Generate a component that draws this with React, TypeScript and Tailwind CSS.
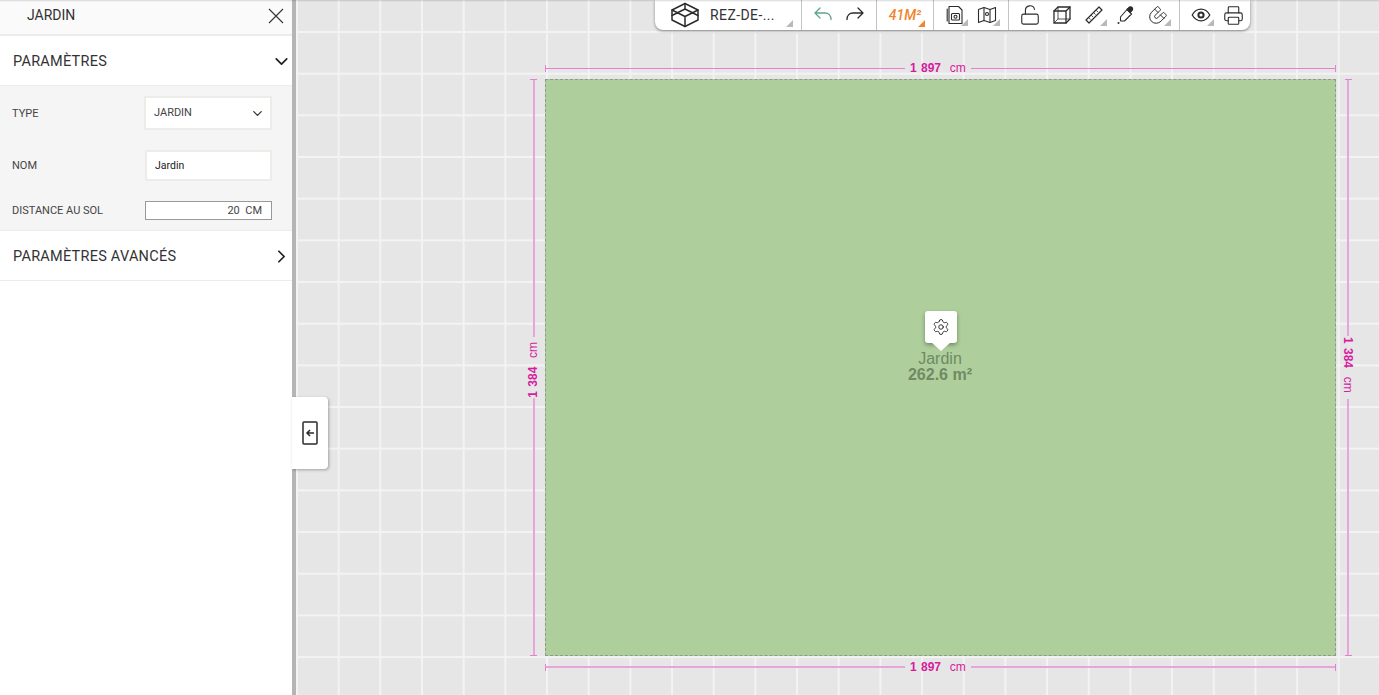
import { ChevronDown, ChevronRight, LockOpen, Magnet, Printer, Settings } from 'lucide-react'
import type { ReactNode } from 'react'

const Corner = () => (
  <span className="absolute right-[3px] bottom-[4px] h-[7px] w-[7px] bg-[#b9b9b9] [clip-path:polygon(100%_0,100%_100%,0_100%)]" />
)

function ToolButton({ children, corner }: { children: ReactNode; corner?: boolean }) {
  return (
    <div className="relative flex h-[30px] w-8 items-center justify-center text-[#2b2b2b]">
      {children}
      {corner && <Corner />}
    </div>
  )
}

const Divider = () => <div className="h-[30px] w-px bg-[#c4c4c4]" />

const iconProps = {
  fill: 'none',
  stroke: 'currentColor',
  strokeWidth: 1.3,
  strokeLinejoin: 'round' as const,
  strokeLinecap: 'round' as const,
}

function Toolbar() {
  return (
    <div className="absolute left-[359px] top-0 flex h-[30px] w-[595px] items-stretch rounded-b-lg bg-white shadow-[0_1px_3px_rgba(0,0,0,0.45)]">
      <div className="relative flex w-[146px] items-center">
        <svg width="30" height="26" viewBox="0 0 30 26" className="ml-[15px] text-[#2b2b2b]" {...iconProps} strokeWidth={1.5}>
          <path d="M15 1.500 28 8v10l-13 6.500L2 18V8z" />
          <path d="M2 8l13 6.500L28 8M15 14.500v10M2 13.500 15 7l13 6.500M15 1.500V7" />
        </svg>
        <span className="ml-[10px] text-[14px] tracking-[0.4px] text-[#333]">REZ-DE-...</span>
        <span className="absolute right-[8px] bottom-[3px] h-[7px] w-[7px] bg-[#b9b9b9] [clip-path:polygon(100%_0,100%_100%,0_100%)]" />
      </div>
      <Divider />
      <div className="flex w-[74px] items-center justify-center">
        <ToolButton>
          <svg width="20" height="20" viewBox="0 0 20 20" className="text-[#5aa58c]" {...iconProps}>
            <path d="M2 8 7 3M2 8l5 5M2 8h10c3.500 0 6 2.500 6 6.500" />
          </svg>
        </ToolButton>
        <ToolButton>
          <svg width="20" height="20" viewBox="0 0 20 20" {...iconProps}>
            <path d="M18 8l-5-5M18 8l-5 5M18 8H8c-3.500 0-6 2.500-6 6.500" />
          </svg>
        </ToolButton>
      </div>
      <Divider />
      <div className="relative flex w-[56px] items-center justify-center text-[14px] font-medium italic text-[#f0852d]">
        41M²
        <span className="absolute right-[8px] bottom-[3px] h-[7px] w-[7px] bg-[#f0852d] [clip-path:polygon(100%_0,100%_100%,0_100%)]" />
      </div>
      <Divider />
      <div className="flex w-[74px] items-center justify-center">
        <ToolButton corner>
          <svg width="18" height="20" viewBox="0 0 18 20" {...iconProps} strokeWidth={1.1}>
            <path d="M3 1.500h9.500L16 5v13.500H3z" />
            <path d="M1.200 4v12" />
            <rect x="5.500" y="8.500" width="8" height="6.500" rx="1" />
            <circle cx="9.500" cy="11.800" r="1.500" />
          </svg>
        </ToolButton>
        <ToolButton corner>
          <svg width="20" height="20" viewBox="0 0 20 20" {...iconProps} strokeWidth={1.1}>
            <path d="M1.500 4.500 7 2.500l6 2 5.500-2v13l-5.500 2-6-2-5.500 2z" />
            <path d="M7 2.500v13M13 4.500v13" />
            <circle cx="10" cy="9" r="1.500" />
          </svg>
        </ToolButton>
      </div>
      <Divider />
      <div className="flex w-[170px] items-center justify-center">
        <ToolButton>
          <LockOpen size={22} strokeWidth={1.2} />
        </ToolButton>
        <ToolButton>
          <svg width="20" height="20" viewBox="0 0 20 20" {...iconProps}>
            <path d="M6 2h12v12l-4 4H2V6z" />
            <path d="M2 6h12v12M14 6l4-4" />
            <path d="M6 2v12H18M6 14l-4 4" strokeWidth="0.8" />
          </svg>
        </ToolButton>
        <ToolButton corner>
          <svg width="20" height="20" viewBox="0 0 20 20" {...iconProps} strokeWidth={1.2}>
            <path d="M15 2 18 5 5 18 2 15z" />
            <path d="M12.500 5.500l1.300 1.300M10 8l1.300 1.300M7.500 10.500l1.300 1.300M5 13l1.300 1.300" strokeWidth="0.8" />
          </svg>
        </ToolButton>
        <ToolButton>
          <svg width="20" height="20" viewBox="0 0 20 20" {...iconProps} strokeWidth={1.1}>
            <path d="M11 4.500 15.500 9 8.500 16H5l-.5-.5V12z" />
            <path d="M12 3.500c1.500-2 3-2 4-1s1 2.500-1 4l-1 .8-3-3z" fill="currentColor" />
            <circle cx="2.500" cy="18" r="1" fill="currentColor" stroke="none" />
          </svg>
        </ToolButton>
        <ToolButton corner>
          <Magnet size={20} strokeWidth={1.2} className="rotate-180" />
        </ToolButton>
      </div>
      <Divider />
      <div className="flex flex-1 items-center pl-[5px]">
        <ToolButton corner>
          <svg width="20" height="14" viewBox="0 0 20 14" {...iconProps}>
            <path d="M1.200 7C3.500 3 6.500 1.200 10 1.200S16.500 3 18.800 7c-2.300 4-5.300 5.800-8.800 5.800S3.500 11 1.200 7z" />
            <circle cx="10" cy="7" r="2.600" strokeWidth="2" />
          </svg>
        </ToolButton>
        <ToolButton>
          <Printer size={21} strokeWidth={1.25} />
        </ToolButton>
      </div>
    </div>
  )
}

function HDim({ top, thick }: { top: number; thick?: boolean }) {
  const line = thick ? 'h-[2px] bg-[#e9a5da]' : 'h-px bg-[#e57fcf]'
  return (
    <div className="absolute left-[249px] flex h-3 w-[791px] items-center" style={{ top }}>
      <div className="h-[7px] w-px bg-[#e57fcf]" />
      <div className={`w-[359px] ${line}`} />
      <span className="mx-[5px] text-[12px] text-[#d61b9e] [font-family:'Liberation_Sans',Arial,sans-serif] [word-spacing:1px]">
        <b>1 897</b>&nbsp; cm
      </span>
      <div className={`flex-1 ${line}`} />
      <div className="h-[7px] w-px bg-[#e57fcf]" />
    </div>
  )
}

function VDim({ left, flip }: { left: number; flip?: boolean }) {
  const line = flip ? 'w-[2px] flex-1 bg-[#e9a5da]' : 'ml-[2px] w-[2px] flex-1 bg-[#e9a5da]'
  return (
    <div
      className={`absolute top-[79px] flex h-[577px] w-3 items-center ${flip ? 'flex-col' : 'flex-col-reverse'}`}
      style={{ left }}
    >
      <div className="h-px w-[7px] bg-[#e57fcf]" />
      <div className={line} />
      <span
        className={`text-[12px] text-[#d61b9e] [writing-mode:vertical-rl] [font-family:'Liberation_Sans',Arial,sans-serif] [word-spacing:1px] ${flip ? 'mt-[1px] mb-[6px]' : 'mt-[5px] mb-[1px] rotate-180'}`}
      >
        <b>1 384</b>&nbsp; cm
      </span>
      <div className={line} />
      <div className="h-px w-[7px] bg-[#e57fcf]" />
    </div>
  )
}

function Sidebar() {
  return (
    <aside className="flex h-full w-[296px] shrink-0 flex-col border-r-4 border-[#b5b5b5] bg-white text-[#333]">
      <header className="flex h-[36px] shrink-0 items-center justify-between border-b-2 border-[#ecece8] bg-[#fafafa] pb-[3px] pl-[27px] pr-[8px]">
        <span className="text-[14px] text-[#333]">JARDIN</span>
        <svg width="16" height="16" viewBox="0 0 16 16" fill="none" stroke="#333" strokeWidth="1.100">
          <path d="M1 1l14 14M15 1 1 15" />
        </svg>
      </header>
      <div className="flex h-[50px] shrink-0 items-center justify-between border-b border-[#ecece8] pl-[13px]">
        <span className="pt-[3px] text-[14.5px] tracking-[0.25px]">PARAMÈTRES</span>
        <ChevronDown size={21} strokeWidth={2} className="mt-[1px] text-[#222]" />
      </div>
      <div className="flex h-[145px] shrink-0 flex-col border-b border-[#ecece8] bg-[#f5f5f5] pl-[12px] pr-[20px] text-[11px] text-[#444]">
        <div className="mt-[10px] flex items-center justify-between">
          <span className="pt-[2px]">TYPE</span>
          <div className="flex h-[34px] w-[128px] items-center justify-between border-2 border-[#ecece8] bg-white pl-[8px] pr-[5px]">
            <span>JARDIN</span>
            <ChevronDown size={15} strokeWidth={2} className="text-[#333]" />
          </div>
        </div>
        <div className="mt-[20px] flex items-center justify-between">
          <span className="pt-[2px]">NOM</span>
          <div className="flex h-[31px] w-[127px] items-center border-2 border-[#ecece8] bg-white pl-[8px] text-[10.500px] text-[#222]">Jardin</div>
        </div>
        <div className="mt-[20px] flex items-center justify-between">
          <span className="pt-[2px]">DISTANCE AU SOL</span>
          <div className="flex h-[19px] w-[127px] items-center justify-end border border-[#999] bg-white pr-[9px] pt-[1px]">20&nbsp;&nbsp;CM</div>
        </div>
      </div>
      <div className="flex h-[50px] shrink-0 items-center justify-between border-b border-[#ecece8] pl-[13px]">
        <span className="pt-[3px] text-[14.5px] tracking-[0.25px]">PARAMÈTRES AVANCÉS</span>
        <ChevronRight size={21} strokeWidth={2} className="mt-[1px] text-[#222]" />
      </div>
    </aside>
  )
}

export default function App() {
  return (
    <div className="relative flex h-[695px] w-[1379px] overflow-hidden font-['Roboto',sans-serif]">
      <Sidebar />
      <main className="relative flex-1 overflow-hidden bg-[#e6e6e6] bg-[linear-gradient(#f3f3f3_2px,transparent_2px),linear-gradient(90deg,#f3f3f3_2px,transparent_2px)] bg-[size:41.68px_41.68px] bg-[position:0_31px]">
        <Toolbar />
        <HDim top={62} />
        <HDim top={661} thick />
        <VDim left={231} />
        <VDim left={1046} flip />
        <div className="absolute left-[249px] top-[79px] h-[577px] w-[791px] border border-dashed border-[#8f9a8a] bg-[#aecf9c]" />
        <div className="absolute left-[629px] top-[311px] flex h-[32px] w-[32px] items-center justify-center rounded-[3px] bg-white shadow-[0_2px_4px_rgba(0,0,0,0.35)]">
          <Settings size={18} strokeWidth={1.2} className="text-[#222]" />
          <span className="absolute left-[6px] top-[31px] h-[9px] w-[20px] bg-white [clip-path:polygon(0_0,100%_0,50%_100%)]" />
        </div>
        <div className="absolute left-[594px] top-[351px] w-[100px] text-center text-[16px] leading-[16px] text-[#6f8a64] [font-family:'Liberation_Sans',Arial,sans-serif]">
          <div>Jardin</div>
          <div className="font-bold">262.6 m²</div>
        </div>
      </main>
      <div className="absolute left-[292px] top-[397px] flex h-[72px] w-[36px] items-center justify-center rounded-r-[4px] bg-white shadow-[1px_1px_3px_rgba(0,0,0,0.3)]">
        <svg width="16" height="24" viewBox="0 0 16 24" fill="none" stroke="#2b2b2b" strokeWidth="1.500">
          <rect x="1" y="1" width="14" height="22" rx="1" />
          <path d="M12 12H5M8 9l-3 3 3 3" />
        </svg>
      </div>
      <div className="pointer-events-none absolute inset-x-0 top-0 h-[2px] bg-gradient-to-b from-black/15 to-transparent" />
    </div>
  )
}
